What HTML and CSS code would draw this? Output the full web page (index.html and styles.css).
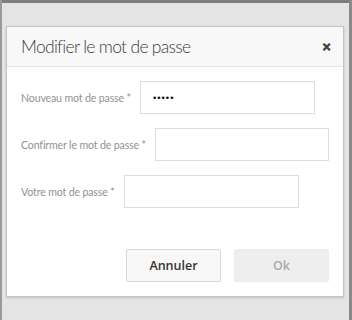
FILE: index.html
```html
<!DOCTYPE html>
<html lang="fr">
<head>
<meta charset="utf-8">
<title>Modifier le mot de passe</title>
<link rel="stylesheet" href="styles.css">
</head>
<body>
<div class="page">
  <div class="topbar"></div>
  <div class="backdrop">
    <div class="dialog">
      <div class="dialog-header">
        <h1 class="dialog-title">Modifier le mot de passe</h1>
        <span class="close">&#x2715;</span>
      </div>
      <form class="dialog-body">
        <div class="row">
          <label class="label">Nouveau mot de passe *</label>
          <input class="field" type="password" value="12345">
        </div>
        <div class="row">
          <label class="label">Confirmer le mot de passe *</label>
          <input class="field" type="password">
        </div>
        <div class="row">
          <label class="label">Votre mot de passe *</label>
          <input class="field" type="password">
        </div>
      </form>
      <div class="dialog-footer">
        <button class="btn btn-cancel" type="button">Annuler</button>
        <button class="btn btn-ok" type="button" disabled>Ok</button>
      </div>
    </div>
  </div>
</div>
</body>
</html>
```
FILE: styles.css
```css
html, body {
  margin: 0;
  padding: 0;
}
body {
  width: 352px;
  height: 320px;
  overflow: hidden;
  background: #e4e4e4;
  font-family: "Open Sans", "Noto Sans", sans-serif;
}
.page {
  height: 320px;
  display: flex;
  flex-direction: column;
  border-left: 2px solid #9a9a9a;
  border-right: 3px solid #8a8a8a;
  box-sizing: border-box;
}
.topbar {
  height: 3px;
  background: #7e7e7e;
}
.backdrop {
  flex: 1;
  background: #e4e4e4;
  padding: 23px 2px 0 4px;
}
.dialog {
  width: 338px;
  box-sizing: border-box;
  background: #fff;
  border: 1px solid #c4c4c4;
  box-shadow: 0 1px 2px rgba(0,0,0,0.15);
}
.dialog-header {
  height: 40px;
  box-sizing: border-box;
  background: #f8f8f8;
  border-bottom: 1px solid #e6e6e6;
  display: flex;
  align-items: center;
  justify-content: space-between;
  padding: 0 12px 0 14px;
}
.dialog-title {
  margin: 0;
  font-family: "Lato", "Open Sans", sans-serif;
  font-size: 17.5px;
  font-weight: 300;
  letter-spacing: -0.7px;
  color: #3c3c3c;
}
.close {
  font-size: 11px;
  font-weight: 700;
  color: #444;
  -webkit-text-stroke: 0.6px #444;
}
.dialog-body {
  margin: 0;
  padding: 14px 14px 0 14px;
  display: flex;
  flex-direction: column;
  gap: 14px;
}
.row {
  display: flex;
  align-items: center;
  gap: 9px;
}
.label {
  font-family: "Lato", "Open Sans", sans-serif;
  font-size: 10.6px;
  letter-spacing: -0.15px;
  color: #929292;
  white-space: nowrap;
}
.field {
  width: 175px;
  height: 33px;
  box-sizing: border-box;
  border: 1px solid #dcdcdc;
  padding: 0 11px;
  font-family: "DejaVu Sans", sans-serif;
  font-size: 9px;
  letter-spacing: -1px;
  color: #111;
  background: #fff;
  outline: none;
  margin: 0;
}
.dialog-footer {
  display: flex;
  justify-content: flex-end;
  gap: 13px;
  padding: 41px 14px 14px;
}
.btn {
  width: 95px;
  height: 33px;
  border-radius: 2px;
  font-family: "Open Sans", "Noto Sans", sans-serif;
  font-size: 12.5px;
  font-weight: 600;
  margin: 0;
}
.btn-cancel {
  background: #f8f8f8;
  border: 1px solid #d8d8d8;
  color: #333;
}
.btn-ok {
  background: #eeeeee;
  border: 1px solid #ececec;
  color: #aaaaaa;
}
```
